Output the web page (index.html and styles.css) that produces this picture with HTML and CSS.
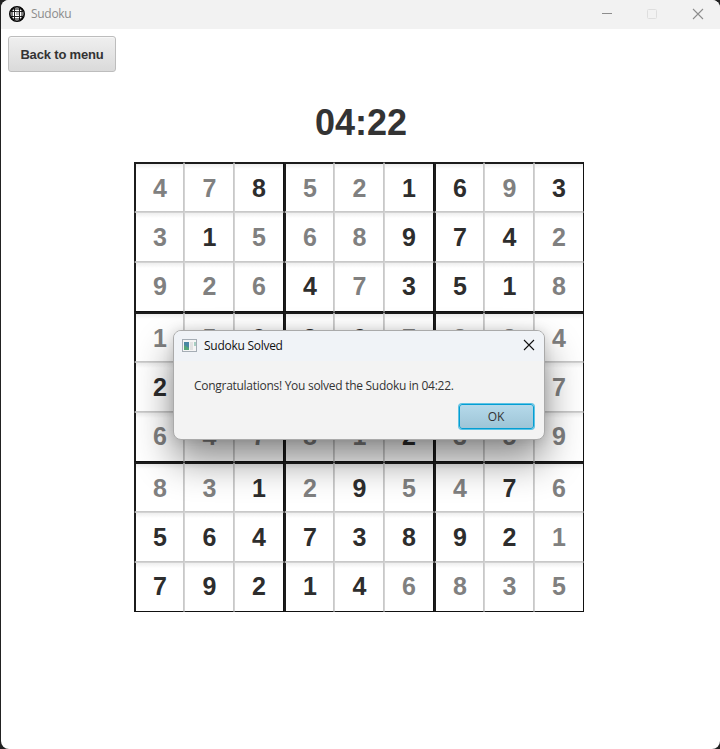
FILE: index.html
```html
<!DOCTYPE html>
<html lang="en">
<head>
<meta charset="utf-8">
<title>Sudoku</title>
<link rel="stylesheet" href="styles.css">
</head>
<body>
<div class="window">
  <header class="titlebar">
    <svg class="app-icon" width="16" height="16" viewBox="0 0 16 16"><circle cx="8" cy="8" r="7.200" fill="#fff" stroke="#000" stroke-width="1.600"/><path d="M5.500 1v14M10.500 1v14M1 5.500h14M1 10.500h14" stroke="#222" stroke-width="1"/><path d="M3 3v10M13 3v10M3 3h10M3 13h10" stroke="#000" stroke-width="1"/><path d="M7 5h3v4H7z" fill="#777" opacity=".5"/></svg>
    <span class="title">Sudoku</span>
    <svg class="controls" width="104" height="12" viewBox="0 0 104 12" fill="none"><path d="M0 5.500h10" stroke="#8d8d8d"/><rect x="45.500" y="1.500" width="9" height="9" rx="1" stroke="#dedede"/><path d="M91 1l10 10M101 1L91 11" stroke="#8d8d8d" stroke-width="1.100"/></svg>
  </header>
  <main class="content">
    <button class="menu-button">Back to menu</button>
    <div class="timer">04:22</div>
    <div class="board" id="board"></div>
  </main>
</div>
<section class="dialog">
  <div class="dialog-bar">
    <svg width="16" height="14" viewBox="0 0 16 14"><rect x=".5" y=".5" width="14" height="12" fill="#f5f5f5" stroke="#a5adb5"/><path d="M2 3h5v8H2z" fill="#4a87a3"/><path d="M2 6l5 3v2H2z" fill="#55a678"/><path d="M8 3h3v8H8z" fill="#e2e2e2"/><path d="M12 3h2v4h-2z" fill="#a9cfc3"/></svg>
    <span class="dialog-title">Sudoku Solved</span>
    <svg class="close" width="12" height="12" viewBox="0 0 12 12"><path d="M1 1l10 10M11 1L1 11" stroke="#111" stroke-width="1.100"/></svg>
  </div>
  <p class="message">Congratulations! You solved the Sudoku in 04:22.</p>
  <button class="ok">OK</button>
</section>
<script src="board.js"></script>
</body>
</html>
```
FILE: styles.css
```css
* { box-sizing: border-box; }
body { margin: 0; background: #222; height: 749px; overflow: hidden; font-family: "Open Sans", sans-serif; }
.window { height: 749px; margin-left: 1px; background: #fff; border-radius: 8px; overflow: hidden; }
.titlebar { height: 29px; background: #f2f2f2; display: flex; align-items: center; padding: 0 14px 2px 8px; }
.title { margin-left: 6px; font-size: 12px; color: #8c8c8c; letter-spacing: -.3px; }
.controls { margin-left: auto; }
.content { padding: 7px 0 0 7px; }
.menu-button { display: block; width: 108px; height: 36px; padding: 0; border: 1px solid #bdbdbd; border-radius: 3px; background: linear-gradient(#efefef, #dadada); box-shadow: inset 0 1px 0 #f7f7f7; font: bold 13px "Liberation Sans", sans-serif; letter-spacing: -.17px; color: #333; }
.timer { width: 706px; margin-top: 30px; height: 42px; text-align: center; font: bold 36px/42px "Liberation Sans", sans-serif; color: #333; }
.board { width: 450px; height: 450px; margin: 18px 0 0 126px; display: grid; grid-template: repeat(9, 50px) / repeat(9, 50px); }
.cell { display: flex; align-items: center; justify-content: center; padding: 1px 0 0 1px; border: 1px solid #c8c8c8; border-left-color: #d3d3d3; border-top-color: #d3d3d3; background: linear-gradient(#eee, #fff 5px); font: bold 25px "Liberation Sans", sans-serif; color: #808080; }
.cell.given { color: #2d2d2d; }
.cell.left { border-left: 2px solid #1c1c1c; }
.cell.right { border-right: 1px solid #111; padding-left: 0; }
.cell.top { border-top: 2px solid #1c1c1c; padding-top: 2px; }
.cell.bottom { border-bottom: 1px solid #111; padding: 0 0 1px 1px; }
.cell.bottom.right { padding-left: 0; }
.dialog { position: absolute; left: 173px; top: 330px; width: 372px; height: 110px; border: 1px solid #aaa; border-radius: 8px; background: #f3f3f3; overflow: hidden; box-shadow: 0 20px 38px rgba(0,0,0,.46), 0 0 12px rgba(0,0,0,.12); }
.dialog-bar { height: 30px; display: flex; align-items: center; padding: 0 9px 1px 8px; background: #f0f3f7; }
.dialog-title { margin-left: 6px; font-size: 12px; color: #111; letter-spacing: -.27px; }
.close { margin-left: auto; position: relative; top: -1px; }
.message { margin: 16px 0 0 20px; font-size: 12px; line-height: 18px; color: #333; white-space: nowrap; letter-spacing: -.28px; }
.ok { display: block; width: 75px; height: 25px; margin: 9px 10px 0 auto; padding: 0 1px 0 0; border: 1px solid #039ed3; border-radius: 3px; background: linear-gradient(#b5d9ea, #9ec5d7); box-shadow: 0 0 0 1px #5fc3e4; color: #333; font: 12px "Open Sans", sans-serif; letter-spacing: -.2px; }
```
FILE: board.js
```js
const rows = ["478521693","315689742","926473518","159367284","283954167","647812359","831295476","564738921","792146835"];
const given = ["001001101","010001110","000101110","001110000","100000000","000001000","001010010","111111110","111110000"];
const board = document.getElementById("board");
rows.forEach((row, y) => [...row].forEach((n, x) => {
  const cell = document.createElement("div");
  cell.className = "cell" + (given[y][x] === "1" ? " given" : "") +
    (x % 3 === 0 ? " left" : "") + (x % 3 === 2 ? " right" : "") +
    (y % 3 === 0 ? " top" : "") + (y % 3 === 2 ? " bottom" : "");
  cell.textContent = n;
  board.append(cell);
}));
```
